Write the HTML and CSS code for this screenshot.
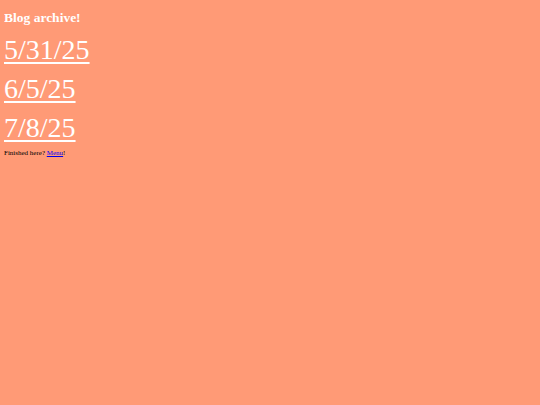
FILE: index.html
```html
<!DOCTYPE html>
<html>
<head>
<meta charset="utf-8">
<link rel="stylesheet" href="styles.css">
</head>
<body>
<h1 class="title">Blog archive!</h1>
<div class="posts">
<a class="post" href="#">5/31/25</a>
<a class="post" href="#">6/5/25</a>
<a class="post" href="#">7/8/25</a>
</div>
<p class="footer">Finished here? <a href="#">Menu</a>!</p>
</body>
</html>
```
FILE: styles.css
```css
html { background: #ff9a76; }
body {
  margin: 4px;
  font-family: "Liberation Serif", serif;
  color: #000;
}
.title {
  font-size: 13.5px;
  font-weight: bold;
  color: #fff;
  margin: 6px 0 0;
  line-height: 16px;
}
.posts {
  display: flex;
  flex-direction: column;
  align-items: flex-start;
  margin-top: 4px;
}
.post {
  font-size: 28px;
  line-height: 39px;
  color: #fff;
  text-decoration-thickness: 2px;
  text-underline-offset: 3px;
}
.footer {
  font-size: 7px;
  margin: 2px 0 0;
}
.footer a { color: #0000ee; }
```
